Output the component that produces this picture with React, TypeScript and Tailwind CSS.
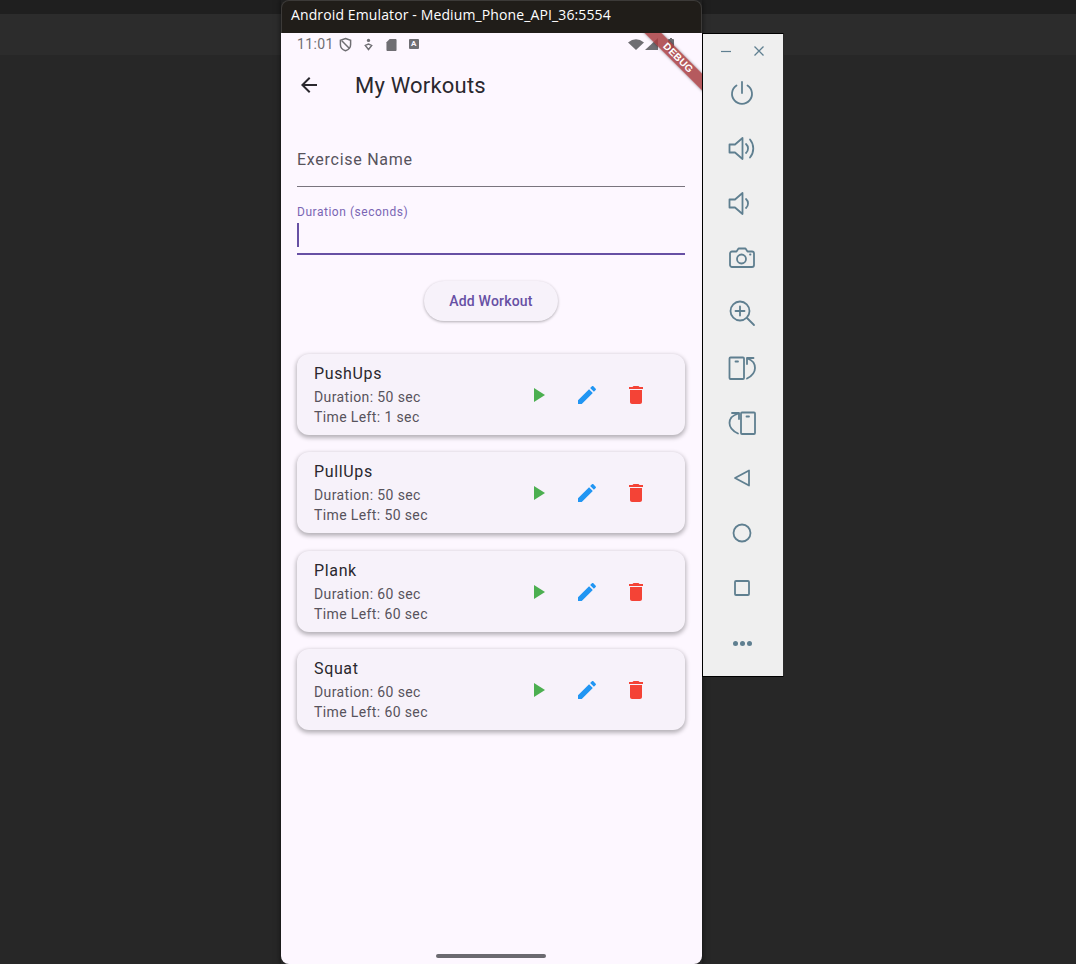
const workouts = [
  { name: "PushUps", duration: 50, left: 1, mt: "mt-0" },
  { name: "PullUps", duration: 50, left: 50, mt: "mt-[17px]" },
  { name: "Plank", duration: 60, left: 60, mt: "mt-[18px]" },
  { name: "Squat", duration: 60, left: 60, mt: "mt-[17px]" },
];

function ToolIcon({ children }: { children: React.ReactNode }) {
  return (
    <div className="h-[55px] pr-[2px] flex items-center justify-center">
      <svg viewBox="0 0 28 28" className="w-[28px] h-[28px] text-[#5f7f90]" fill="none" stroke="currentColor" strokeWidth="1.8" strokeLinecap="round" strokeLinejoin="round">
        {children}
      </svg>
    </div>
  );
}

function EmulatorToolbar() {
  return (
    <div className="absolute left-[702px] top-[33px] w-[82px] h-[644px] bg-[#efefef] border-l border-t border-b border-r border-black border-r-[#2a2a2a]">
      <div className="h-[31px] flex items-center justify-between pl-[18px] pr-[19px] pt-[2px]">
        <svg viewBox="0 0 10 10" className="w-[10px] h-[10px] text-[#5f7f90]" stroke="currentColor" strokeWidth="1.2"><path d="M0 5.5h10" /></svg>
        <svg viewBox="0 0 10 10" className="w-[10px] h-[10px] text-[#5f7f90]" stroke="currentColor" strokeWidth="1.3"><path d="M.5.5l9 9M9.5.5l-9 9" /></svg>
      </div>
      <ToolIcon><path d="M14 3v11" /><path d="M8.5 6.5a10 10 0 1 0 11 0" /></ToolIcon>
      <ToolIcon>
        <path d="M1.500 10.500v8H7l7.500 6.500V4L7 10.500z" />
        <path d="M18 10a6 6 0 0 1 0 9" />
        <path d="M22 5.500a14 14 0 0 1 0 18" />
      </ToolIcon>
      <ToolIcon>
        <path d="M1.500 10.500v8H7l7.500 6.500V4L7 10.500z" />
        <path d="M18 10a6 6 0 0 1 0 9" />
      </ToolIcon>
      <ToolIcon>
        <path d="M2 9.500a2 2 0 0 1 2-2h4.500l2-3h7l2 3H24a2 2 0 0 1 2 2V21a2 2 0 0 1-2 2H4a2 2 0 0 1-2-2z" />
        <circle cx="13.500" cy="15" r="4.500" />
        <path d="M22 10.500h.5" />
      </ToolIcon>
      <ToolIcon>
        <circle cx="12" cy="12" r="9.500" />
        <path d="M12 7.500v9M7.500 12h9M19 19l7 7" />
      </ToolIcon>
      <ToolIcon>
        <rect x="1.500" y="3.500" width="14.500" height="21.500" rx="1" />
        <path d="M7.500 7.500h2.500" />
        <path d="M25.500 4H19v6" />
        <path d="M19.500 4.500C24 6 27 9.500 27 14s-3 8-8 10.500" />
      </ToolIcon>
      <ToolIcon>
        <rect x="13" y="3.500" width="14" height="21.500" rx="1" />
        <path d="M18.500 7.500H21" />
        <path d="M4 4h7v6" />
        <path d="M10.500 4.500C5 6 1.500 9.500 1.500 14s3 8 8.500 10.500" />
      </ToolIcon>
      <ToolIcon><path d="M21 6.500v15L7 14z" /></ToolIcon>
      <ToolIcon><circle cx="14" cy="14" r="8.500" /></ToolIcon>
      <ToolIcon><rect x="7" y="7" width="14" height="14" rx="1" /></ToolIcon>
      <div className="h-[55px] pr-[2px] pt-[1px] flex items-center justify-center gap-[2px]">
        <span className="w-[5px] h-[5px] rounded-full bg-[#5f7f90]" />
        <span className="w-[5px] h-[5px] rounded-full bg-[#5f7f90]" />
        <span className="w-[5px] h-[5px] rounded-full bg-[#5f7f90]" />
      </div>
    </div>
  );
}

function StatusBar() {
  return (
    <div className="h-[22px] flex items-center justify-between pl-[16px] pr-[27px] text-[#6f6e73]">
      <div className="flex items-center">
        <span className="text-[14px] leading-[22px] tracking-[0.35px]">11:01</span>
        <svg viewBox="0 0 14 16" className="ml-[5px] w-[13px] h-[15px]" fill="none" stroke="currentColor" strokeWidth="1.6">
          <path d="M7 1.500l5.500 2v4.500c0 3.500-2.500 5.800-5.500 6.700C4 13.800 1.500 11.500 1.500 8V3.500z" />
          <path d="M3 4l8 8" />
        </svg>
        <svg viewBox="0 0 12 14" className="ml-[11px] w-[11px] h-[13px]" fill="none" stroke="currentColor" strokeWidth="1.5">
          <circle cx="6" cy="2.500" r="1.800" fill="currentColor" stroke="none" />
          <path d="M2.500 8L6 6.500 9.500 8 6 12.500z" />
        </svg>
        <svg viewBox="0 0 12 14" className="ml-[12px] w-[11px] h-[13px]" fill="currentColor">
          <path d="M4 1h6.500a1 1 0 0 1 1 1v11a1 1 0 0 1-1 1h-9a1 1 0 0 1-1-1V4.500z" />
        </svg>
        <div className="ml-[12px] w-[10px] h-[10px] bg-[#6f6e73] rounded-[1px] flex items-center justify-center text-[8px] leading-none font-bold text-[#fdf7ff]">A</div>
      </div>
      <div className="flex items-center gap-[1px]">
        <svg viewBox="0 0 16 12" className="w-[16px] h-[12px]" fill="currentColor"><path d="M0 4.500Q8-2 16 4.500L8 12z" /></svg>
        <svg viewBox="0 0 13 12" className="w-[13px] h-[12px]" fill="currentColor"><path d="M13 0v12H0z" /></svg>
        <svg viewBox="0 0 8 13" className="ml-[8px] w-[8px] h-[13px]" fill="currentColor"><path d="M2 1h1V0h2v1h1a1 1 0 0 1 1 1v10a1 1 0 0 1-1 1H2a1 1 0 0 1-1-1V2a1 1 0 0 1 1-1z" /></svg>
      </div>
    </div>
  );
}

function WorkoutCard({ name, duration, left, mt }: { name: string; duration: number; left: number; mt: string }) {
  return (
    <div className={`h-[81px] rounded-[12px] bg-[#f7f2fa] shadow-[0_2px_4px_1px_rgba(0,0,0,0.28)] flex items-center justify-between pl-[17px] pr-[37px] ${mt}`}>
      <div className="pt-[1px] tracking-[0.38px]">
        <div className="text-[16px] leading-[22px] tracking-[0.65px] text-[#2a282e]">{name}</div>
        <div className="text-[14px] leading-[20px] mt-[2px] text-[#57535c]">Duration: {duration} sec</div>
        <div className="text-[14px] leading-[20px] text-[#57535c]">Time Left: {left} sec</div>
      </div>
      <div className="flex items-center gap-[25px] mt-[1px]">
        <svg viewBox="0 0 24 24" className="w-[24px] h-[24px] text-[#4caf50]" fill="currentColor"><path d="M8 5v14l11-7z" /></svg>
        <svg viewBox="0 0 24 24" className="w-[24px] h-[24px] text-[#2196f3]" fill="currentColor"><path d="M3 17.250V21h3.750L17.810 9.940l-3.750-3.750L3 17.250zM20.710 7.040c.39-.39.39-1.020 0-1.410l-2.340-2.340c-.39-.39-1.020-.39-1.410 0l-1.830 1.830 3.750 3.750 1.830-1.830z" /></svg>
        <svg viewBox="0 0 24 24" className="w-[24px] h-[24px] text-[#f44336]" fill="currentColor"><path d="M6 19c0 1.100.9 2 2 2h8c1.100 0 2-.9 2-2V7H6v12zM19 4h-3.500l-1-1h-5l-1 1H5v2h14V4z" /></svg>
      </div>
    </div>
  );
}

function Phone() {
  return (
    <div className="absolute left-[281px] top-0 w-[421px] h-[964px] flex flex-col font-['Roboto',sans-serif] shadow-[0_0_6px_rgba(0,0,0,0.6)]">
      <div className="h-[33px] bg-[#201d19] rounded-t-[8px] flex items-center pl-[9px] pb-[5px] text-[14px] tracking-[0.12px] text-white font-['Open_Sans','Noto_Sans',sans-serif] border-t border-x border-[#3c3a38]">
        Android Emulator - Medium_Phone_API_36:5554
      </div>
      <div className="relative flex-1 bg-[#fdf7ff] overflow-hidden rounded-b-[8px] flex flex-col">
        <StatusBar />
        <div className="h-[60px] flex items-center pl-[16px]">
          <svg viewBox="0 0 24 24" className="w-[24px] h-[24px] text-[#2a282e]" fill="currentColor"><path d="M20 11H7.830l5.590-5.590L12 4l-8 8 8 8 1.410-1.410L7.830 13H20v-2z" /></svg>
          <span className="ml-[34px] mt-[2px] text-[22px] leading-[28px] tracking-[0.2px] text-[#2a282e]">My Workouts</span>
        </div>
        <div className="pl-[16px] pr-[17px] flex flex-col">
          <div className="mt-[19px] h-[53px] border-b border-[#79747e] pt-[16px] text-[16px] leading-[20px] tracking-[0.73px] text-[#57535c]">Exercise Name</div>
          <div className="mt-[17px] h-[51px] border-b-2 border-[#6750a4]">
            <div className="text-[12px] leading-[16px] tracking-[0.53px] text-[#7a65b4]">Duration (seconds)</div>
            <div className="mt-[3px] w-[2px] h-[24px] bg-[#6750a4]" />
          </div>
          <div className="mt-[26px] flex justify-center">
            <div className="w-[134px] h-[40px] rounded-full bg-[#f7f2fa] shadow-[0_1px_3px_rgba(0,0,0,0.3)] flex items-center justify-center text-[14px] font-medium tracking-[0.2px] text-[#6750a4]">Add Workout</div>
          </div>
          <div className="mt-[33px] flex flex-col">
            {workouts.map((w) => (
              <WorkoutCard key={w.name} {...w} />
            ))}
          </div>
        </div>
        <div className="absolute left-[155px] bottom-[6px] w-[110px] h-[4px] rounded-full bg-[#6b6a70]" />
        {/* flutter debug banner */}
        <div className="absolute right-[-31px] top-[19px] w-[110px] h-[12px] rotate-45 bg-[#a83e42]/85 shadow-[0_0_3px_rgba(0,0,0,0.4)] flex items-center justify-center text-[10px] font-black leading-none tracking-[0.3px] text-white font-['Liberation_Sans',sans-serif]">DEBUG</div>
      </div>
    </div>
  );
}

export default function App() {
  return (
    <div className="relative w-[1076px] h-[964px] overflow-hidden bg-[#272727] flex flex-col">
      <div className="h-[14px] bg-[#1f1f1f]" />
      <div className="h-[41px] bg-[#2c2c2c]" />
      <Phone />
      <EmulatorToolbar />
    </div>
  );
}
